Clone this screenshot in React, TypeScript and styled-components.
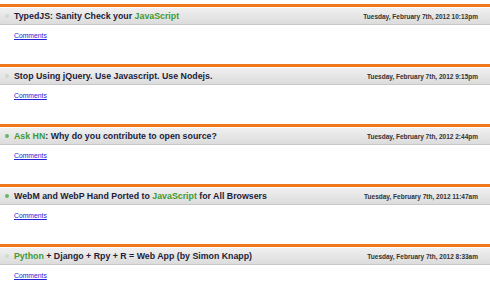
import React, { ReactElement } from 'react';
import styled, { createGlobalStyle } from 'styled-components';

const GlobalStyle = createGlobalStyle`
  html, body {
    margin: 0;
    padding: 0;
    background: #fff;
  }
  body {
    font-family: "Liberation Sans", Arial, sans-serif;
  }
`;

const List = styled.div`
  padding-top: 4px;
`;

const Post = styled.div`
  height: 60px;
`;

const Header = styled.div`
  height: 16px;
  border-top: 3px solid #f0791e;
  box-shadow: inset 0 1px 0 #fff;
  padding-top: 1px;
  background: linear-gradient(#f1f1f1, #dcdcdc);
  border-bottom: 1px solid #c8c8c8;
  display: flex;
  align-items: center;
  justify-content: space-between;
  padding-right: 12px;
  padding-left: 5px;
`;

const Heading = styled.h2`
  margin: 0;
  display: flex;
  align-items: center;
  gap: 5px;
  font-size: 8.8px;
  font-weight: bold;
  color: #1d1d3a;
  white-space: nowrap;
`;

const Dot = styled.span<{ $active?: boolean }>`
  width: 4px;
  height: 4px;
  border-radius: 50%;
  background: ${({ $active }) => ($active ? '#67b567' : '#cfdacf')};
`;

const Tag = styled.span`
  color: #3f9a35;
`;

const Stamp = styled.span`
  font-size: 6.5px;
  font-weight: bold;
  color: #333;
  white-space: nowrap;
`;

const Body = styled.div`
  padding: 6px 14px 0;
  font-size: 6.8px;
  line-height: 9px;
`;

const CommentsLink = styled.a`
  color: #2323d6;
  text-decoration: underline;
`;

type Part = { text: string; tag?: boolean };

const posts: { parts: Part[]; date: string; active?: boolean }[] = [
  { parts: [{ text: 'TypedJS: Sanity Check your ' }, { text: 'JavaScript', tag: true }], date: 'Tuesday, February 7th, 2012 10:13pm' },
  { parts: [{ text: 'Stop Using jQuery. Use Javascript. Use Nodejs.' }], date: 'Tuesday, February 7th, 2012 9:15pm' },
  { parts: [{ text: 'Ask HN', tag: true }, { text: ': Why do you contribute to open source?' }], date: 'Tuesday, February 7th, 2012 2:44pm', active: true },
  { parts: [{ text: 'WebM and WebP Hand Ported to ' }, { text: 'JavaScript', tag: true }, { text: ' for All Browsers' }], date: 'Tuesday, February 7th, 2012 11:47am', active: true },
  { parts: [{ text: 'Python', tag: true }, { text: ' + Django + Rpy + R = Web App (by Simon Knapp)' }], date: 'Tuesday, February 7th, 2012 8:33am' },
];

const App = (): ReactElement => (
  <>
    <GlobalStyle />
    <List>
      {posts.map((post) => (
        <Post key={post.date}>
          <Header>
            <Heading>
              <Dot $active={post.active} />
              <span>
                {post.parts.map((part) => (part.tag
                  ? <Tag key={part.text}>{part.text}</Tag>
                  : <React.Fragment key={part.text}>{part.text}</React.Fragment>))}
              </span>
            </Heading>
            <Stamp>{post.date}</Stamp>
          </Header>
          <Body>
            <CommentsLink href="#">Comments</CommentsLink>
          </Body>
        </Post>
      ))}
    </List>
  </>
);

export default App;
